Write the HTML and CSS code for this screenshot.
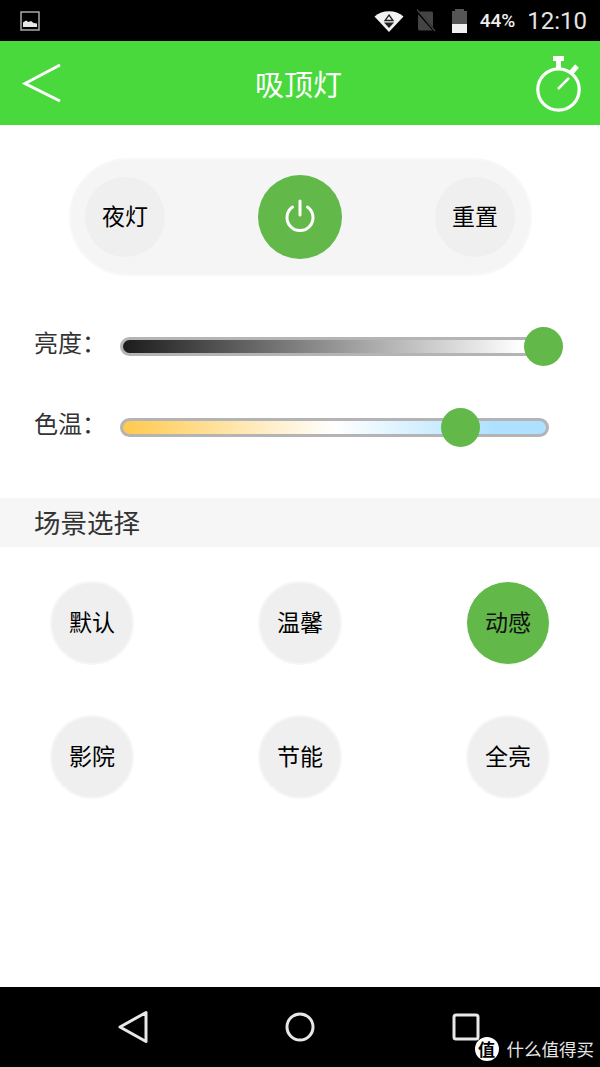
FILE: index.html
```html
<!DOCTYPE html>
<html>
<head>
    <title>吸顶灯</title>
    <meta name="viewport" content="width=device-width, initial-scale=1.0">
    <link rel="stylesheet" href="styles.css">
</head>
<body>
    <div id="phone">
        <div id="status-bar">
            <svg class="status-pic" width="20" height="20" viewBox="0 0 20 20">
                <rect x="1" y="1" width="18" height="18" fill="#000" stroke="#b5b5b5" stroke-width="1.4"/>
                <path d="M3 16V11.5L6 9.5L8.5 11L11 10L13.5 12L17 12.5V16Z" fill="#e8e8e8"/>
            </svg>
            <div class="status-right">
                <svg class="status-wifi" width="30" height="22" viewBox="0 0 30 22">
                    <path d="M0.5 6.5C8 -0.5 22 -0.5 29.5 6.5L15 22Z" fill="#f2f2f2"/>
                    <path d="M15 5L19 10.5H11Z" fill="none" stroke="#222" stroke-width="1.3"/>
                    <path d="M10 12.5H20L15 18Z" fill="#222"/>
                </svg>
                <svg class="status-sim" width="22" height="24" viewBox="0 0 22 24">
                    <path d="M3 2.5H16.5Q18 2.5 18 4V20Q18 21.5 16.5 21.5H4.5Q3 21.5 3 20Z" fill="#444"/>
                    <path d="M1 1L21 23.5" stroke="#000" stroke-width="2.5"/>
                    <path d="M2 0.5L20 22" stroke="#444" stroke-width="1.2"/>
                </svg>
                <svg class="status-battery" width="15" height="24" viewBox="0 0 15 24">
                    <path d="M3 0H12V2H15V24H0V2H3Z" fill="#555"/>
                    <rect y="15" width="15" height="9" fill="#f0f0f0"/>
                </svg>
                <span class="status-pct">44%</span>
                <span class="status-time">12:10</span>
            </div>
        </div>

        <div id="app-header">
            <svg class="back-icon" width="40" height="40" viewBox="0 0 40 40">
                <path d="M38 2L3 20.5L38 38" fill="none" stroke="#fff" stroke-width="3"/>
            </svg>
            <h1>吸顶灯</h1>
            <svg class="timer-icon" width="48" height="58" viewBox="0 0 48 58">
                <circle cx="23.5" cy="34.5" r="20.7" fill="none" stroke="#fff" stroke-width="3.2"/>
                <rect x="18" y="1" width="11" height="5" fill="#fff"/>
                <rect x="21" y="5" width="5" height="9" fill="#fff"/>
                <path d="M36 18L42 11" stroke="#fff" stroke-width="5"/>
                <path d="M23 34L34 23" stroke="#fff" stroke-width="2.5"/>
            </svg>
        </div>

        <div id="content">
            <div class="power-panel">
                <button class="round-btn">夜灯</button>
                <button class="power-btn">
                    <svg width="32" height="36" viewBox="0 0 32 36">
                        <path d="M8.5 8A13 13 0 1 0 23.5 8" fill="none" stroke="#fff" stroke-width="3" stroke-linecap="round"/>
                        <path d="M16 2V16" stroke="#fff" stroke-width="3" stroke-linecap="round"/>
                    </svg>
                </button>
                <button class="round-btn">重置</button>
            </div>

            <div class="slider-row first">
                <span class="slider-label">亮度：</span>
                <div class="track brightness">
                    <div class="thumb" style="left: 99.3%"></div>
                </div>
            </div>
            <div class="slider-row">
                <span class="slider-label">色温：</span>
                <div class="track temperature">
                    <div class="thumb" style="left: 79.7%"></div>
                </div>
            </div>

            <div class="section-title">场景选择</div>

            <div class="scene-grid">
                <button class="scene-btn">默认</button>
                <button class="scene-btn">温馨</button>
                <button class="scene-btn active">动感</button>
                <button class="scene-btn">影院</button>
                <button class="scene-btn">节能</button>
                <button class="scene-btn">全亮</button>
            </div>
        </div>

        <div id="nav-bar">
            <svg width="40" height="40" viewBox="0 0 40 40">
                <path d="M7 20L33 5.5V34.5Z" fill="none" stroke="#e8e8e8" stroke-width="3" stroke-linejoin="round"/>
            </svg>
            <svg width="40" height="40" viewBox="0 0 40 40">
                <circle cx="20" cy="20" r="13" fill="none" stroke="#e8e8e8" stroke-width="3"/>
            </svg>
            <svg width="40" height="40" viewBox="0 0 40 40">
                <rect x="8" y="8" width="24" height="24" rx="2" fill="none" stroke="#e8e8e8" stroke-width="3"/>
            </svg>
            <div class="watermark">
                <span class="watermark-badge">值</span>
                <span>什么值得买</span>
            </div>
        </div>
    </div>
</body>
</html>
```

FILE: styles.css
```css
* {
    box-sizing: border-box;
    margin: 0;
    padding: 0;
}

body {
    font-family: "Noto Sans CJK SC", "Noto Sans", sans-serif;
    background: #fff;
    overflow: hidden;
}

button {
    font-family: inherit;
    border: none;
}

#phone {
    display: flex;
    flex-direction: column;
    width: 600px;
    height: 1067px;
}

/* Status bar */
#status-bar {
    display: flex;
    justify-content: space-between;
    align-items: center;
    height: 41px;
    padding: 0 13px 0 20px;
    background: #000;
}

.status-right {
    display: flex;
    align-items: center;
}

.status-wifi {
    margin-right: 11px;
}

.status-sim {
    margin-right: 15px;
}

.status-battery {
    margin-right: 13px;
}

.status-pct {
    margin-right: 12px;
    font-family: Roboto, sans-serif;
    font-size: 19px;
    font-weight: 500;
    color: #eee;
}

.status-time {
    font-family: Roboto, sans-serif;
    font-size: 24px;
    color: #e4e4e4;
}

/* Header */
#app-header {
    display: flex;
    justify-content: space-between;
    align-items: center;
    height: 84px;
    padding: 0 17px 0 22px;
    background: #4ad93c;
}

#app-header h1 {
    font-size: 29px;
    font-weight: 400;
    color: #fff;
}

.timer-icon {
    margin-top: 2px;
}

/* Main content */
#content {
    flex-grow: 1;
    background: #fff;
}

.power-panel {
    display: flex;
    justify-content: space-between;
    align-items: center;
    width: 463px;
    height: 118px;
    margin: 33px 0 0 69px;
    padding: 0 15px 0 14px;
    background: #f5f5f5;
    border: 2px solid #f8f8f8;
    border-radius: 59px;
}

.round-btn {
    width: 80px;
    height: 80px;
    padding-bottom: 5px;
    border-radius: 50%;
    background: #efefef;
    font-size: 23px;
    color: #000;
}

.power-btn {
    display: flex;
    justify-content: center;
    align-items: center;
    width: 84px;
    height: 84px;
    border-radius: 50%;
    background: #62b849;
}

.slider-row {
    display: flex;
    align-items: center;
    height: 39px;
    margin-top: 42px;
}

.slider-row.first {
    margin-top: 51px;
}

.slider-label {
    width: 120px;
    padding: 0 0 11px 34px;
    font-size: 24px;
    color: #333;
}

.track {
    position: relative;
    width: 429px;
    height: 19px;
    border: 3px solid #b4b4b4;
    border-radius: 10px;
}

.brightness {
    background: linear-gradient(to right, #1c1c1c, #fff 94%);
}

.temperature {
    background: linear-gradient(to right, #ffc94e 0%, #fff 50%, #aee1ff 88%);
}

.thumb {
    position: absolute;
    top: 50%;
    width: 39px;
    height: 39px;
    margin: -19.5px 0 0 -19.5px;
    border-radius: 50%;
    background: #62b849;
}

.section-title {
    height: 49px;
    margin-top: 51px;
    padding-left: 34px;
    background: #f6f6f6;
    font-size: 26.5px;
    line-height: 48px;
    color: #333;
}

.scene-grid {
    display: grid;
    grid-template-columns: repeat(3, 84px);
    justify-content: space-between;
    row-gap: 50px;
    margin-top: 34px;
    padding: 0 50px;
}

.scene-btn {
    width: 84px;
    height: 84px;
    padding-bottom: 4px;
    border-radius: 50%;
    border: 2px solid #f6f6f6;
    background: #efefef;
    font-size: 23px;
    color: #000;
}

.scene-btn.active {
    border: 1px solid #fff;
    background: #62b849;
    color: #111;
}

/* Navigation bar */
#nav-bar {
    position: relative;
    display: flex;
    justify-content: space-between;
    align-items: center;
    height: 80px;
    padding: 0 114px 0 113px;
    background: #000;
}

.watermark {
    position: absolute;
    right: 6px;
    bottom: 6px;
    display: flex;
    align-items: center;
    gap: 8px;
    font-size: 17.5px;
    color: #e6e6e6;
}

.watermark-badge {
    display: flex;
    justify-content: center;
    align-items: center;
    width: 24px;
    height: 24px;
    border-radius: 50%;
    background: #fff;
    font-size: 17px;
    font-weight: 700;
    color: #000;
}
```
